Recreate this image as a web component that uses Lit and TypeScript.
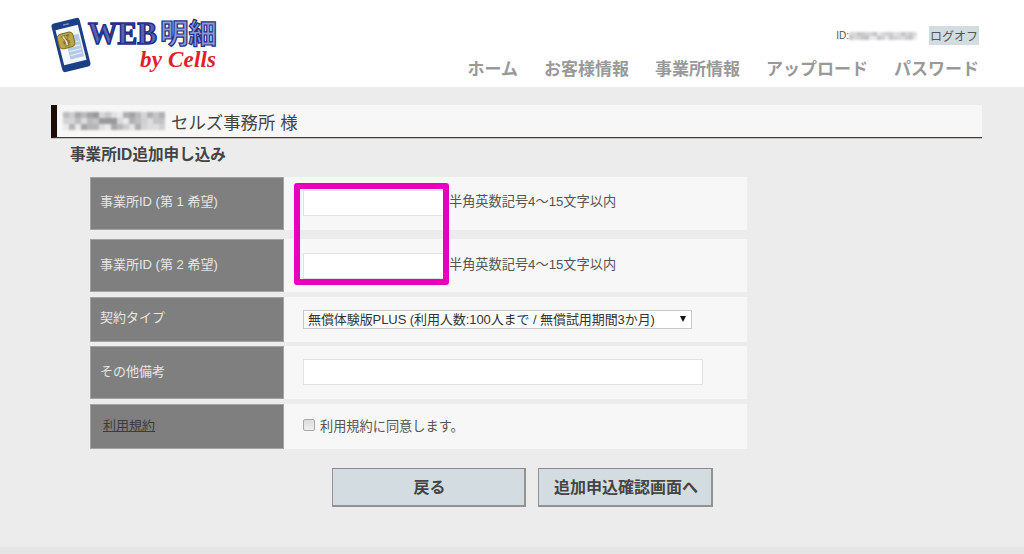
import { LitElement, html, css, svg, unsafeCSS } from "lit";
import { customElement } from "lit/decorators.js";

const SANS = unsafeCSS(`"Liberation Sans", "Noto Sans CJK JP", sans-serif`);

// Pseudo-random mosaic that stands in for the redacted text
function mosaic(cols: number, rows: number, size: number, seed: number, dark: number) {
  let s = seed;
  const out = [];
  for (let y = 0; y < rows; y++) {
    for (let x = 0; x < cols; x++) {
      s = (s * 9301 + 49297) % 233280;
      const t = s / 233280;
      const v = Math.round(dark + (236 - dark) * t);
      out.push(svg`<rect x=${x * size} y=${y * size} width=${size} height=${size} fill=${`rgb(${v},${v},${v + 2})`}></rect>`);
    }
  }
  return html`<svg class="mosaic" width=${cols * size} height=${rows * size}>${out}</svg>`;
}

@customElement("app-root")
export class AppRoot extends LitElement {
  static styles = css`
    :host {
      display: block;
      width: 1024px;
      height: 554px;
      overflow: hidden;
      position: relative;
      background: #ececec;
      font-family: ${SANS};
      color: #444;
    }
    .header {
      height: 87px;
      background: #fff;
      display: flex;
      justify-content: space-between;
      padding: 0 45px 0 51px;
      box-sizing: border-box;
    }
    .logo { display: block; margin-top: 16px; overflow: visible; }
    .head-right {
      display: flex;
      flex-direction: column;
      align-items: flex-end;
      padding-top: 26px;
    }
    .account { display: flex; align-items: center; height: 19px; font-size: 10px; color: #555; }
    .mosaic { display: block; }
    .id-mask { margin-right: 12px; filter: blur(0.8px); }
    .logoff {
      display: flex;
      align-items: center;
      justify-content: center;
      width: 50px;
      height: 19px;
      background: #d3dce1;
      font-size: 12px;
      color: #555;
    }
    .nav { display: flex; gap: 26px; margin-top: 15px; }
    .nav a { font-size: 17px; line-height: 20px; font-weight: 700; color: #999; text-decoration: none; }
    .title {
      margin: 18px 42px 0 51px;
      height: 33px;
      box-sizing: border-box;
      background: #f7f7f7;
      border-left: 6px solid #1c0b07;
      border-bottom: 1px solid #443a3a;
      box-shadow: 0 1px 0 #c4c0c0;
      display: flex;
      align-items: center;
      padding-left: 6px;
      font-size: 17.4px;
      color: #444;
    }
    .name-mask { margin-right: 6px; filter: blur(1px); }
    .heading {
      margin: 7px 0 0 70px;
      height: 32px;
      line-height: 19px;
      font-size: 15.6px;
      font-weight: 700;
      color: #444;
    }
    .table { margin-left: 90px; width: 657px; display: flex; flex-direction: column; gap: 5px; }
    .row { display: grid; grid-template-columns: 194px 1fr; background: #f7f7f7; }
    .tall { height: 53px; }
    .short { height: 45px; }
    .first { margin-bottom: 4px; }
    .tight { margin-bottom: -1px; }
    .label {
      background: #7f7f7f;
      border: 1px solid #a3a3a3;
      box-sizing: border-box;
      display: flex;
      align-items: center;
      padding: 0 0 6px 9px;
      font-size: 13px;
      color: #e6e6e6;
    }
    .low .label { padding-bottom: 4px; }
    .label a { color: #3c3c3c; text-decoration: underline; margin-left: 3px; }
    .cell { display: flex; align-items: center; padding-left: 19px; font-size: 13px; color: #555; }
    .cell-up { padding-bottom: 2px; }
    .cell-up-small { padding-bottom: 1px; }
    .text {
      box-sizing: border-box;
      height: 26px;
      border: 1px solid #e2e2e2;
      background: #fff;
      padding: 0;
      margin: 0;
    }
    .id-input { width: 141px; margin-right: 5px; }
    .wide { width: 400px; }
    .hint { margin-bottom: 4px; font-size: 13.2px; }
    .select-wrap { position: relative; width: 389px; height: 19px; }
    select {
      appearance: none;
      display: block;
      width: 100%;
      height: 100%;
      box-sizing: border-box;
      border: 1px solid #c8c8c8;
      background: #fff;
      padding: 0 0 0 4px;
      font: 13px ${SANS};
      letter-spacing: -0.08px;
      color: #333;
      border-radius: 0;
    }
    .select-wrap::after {
      content: "";
      position: absolute;
      right: 6px;
      top: 6px;
      border-left: 3.5px solid transparent;
      border-right: 3.5px solid transparent;
      border-top: 6px solid #111;
    }
    .check { display: flex; align-items: center; gap: 5px; margin-bottom: 2px; font-size: 13.2px; }
    input[type="checkbox"] {
      appearance: none;
      width: 12px;
      height: 12px;
      margin: 0 0 1px 0;
      box-sizing: border-box;
      border: 1px solid #a8a8a8;
      border-radius: 2px;
      background: linear-gradient(#dcdcdc, #efefef);
    }
    .buttons { display: flex; gap: 12px; margin: 19px 0 0 332px; }
    button {
      height: 39px;
      box-sizing: border-box;
      border: 2px solid #929292;
      border-top-color: #8a8a8a;
      border-left-width: 1px;
      border-top-width: 1px;
      background: #d3dce1;
      font: 700 16px ${SANS};
      color: #444;
      padding: 0 0 2px 2px;
    }
    .back { width: 194px; }
    .next { width: 175px; }
    .footer { position: absolute; left: 0; right: 0; bottom: 0; height: 7px; background: #e5e5e5; }
    .annotation {
      position: absolute;
      left: 294px;
      top: 183px;
      width: 155px;
      height: 102px;
      box-sizing: border-box;
      border: 6px solid #e600bd;
      border-radius: 3px;
      pointer-events: none;
    }
  `;

  private logo() {
    return html`<svg class="logo" width="170" height="60" viewBox="0 0 170 60" aria-label="WEB明細 by Cells">
      <g transform="translate(20 29) rotate(-14)">
        <rect x="-14.5" y="-25" width="29" height="50" rx="3" fill="#1b3f86"></rect>
        <rect x="-11.5" y="-18" width="23" height="36" fill="#f4f7fc"></rect>
        <rect x="-4" y="-9" width="14" height="23" fill="#b4c8e9"></rect>
        <g stroke="#eef3fb" stroke-width="1">
          <line x1="-3" y1="-2" x2="9" y2="-2"></line>
          <line x1="-3" y1="2" x2="9" y2="2"></line>
          <line x1="-3" y1="6" x2="9" y2="6"></line>
          <line x1="-3" y1="10" x2="9" y2="10"></line>
        </g>
        <rect x="-3" y="-22" width="6" height="1.5" fill="#7d93bf"></rect>
      </g>
      <g transform="translate(15 24) rotate(-14)">
        <rect x="-8" y="-7" width="16" height="15" rx="4" fill="#bda549" stroke="#7e6a22" stroke-width="1"></rect>
        <text x="0" y="6" text-anchor="middle" font-family="Liberation Serif" font-weight="700" font-size="16" fill="#f3e9b5" stroke="#5f4f18" stroke-width="0.5">¥</text>
      </g>
      <text x="37" y="28" font-family="Liberation Serif" font-weight="700" font-size="31" textLength="69" lengthAdjust="spacingAndGlyphs" fill="#5566b5" stroke="#1f2f86" stroke-width="1.6">WEB</text>
      <text x="109" y="28" font-family="Noto Sans CJK JP" font-weight="700" font-size="28" textLength="57" lengthAdjust="spacingAndGlyphs" fill="#8d99d4" stroke="#1f2f86" stroke-width="1.2">明細</text>
      <text x="89" y="51" font-family="Liberation Serif" font-weight="700" font-style="italic" font-size="23" textLength="76" lengthAdjust="spacing" fill="#e2202c">by Cells</text>
    </svg>`;
  }

  render() {
    return html`
      <div class="header">
        ${this.logo()}
        <div class="head-right">
          <div class="account">
            <span>ID:</span>
            <span class="id-mask">${mosaic(17, 2, 4, 7, 190)}</span>
            <span class="logoff">ログオフ</span>
          </div>
          <nav class="nav">
            <a href="#">ホーム</a>
            <a href="#">お客様情報</a>
            <a href="#">事業所情報</a>
            <a href="#">アップロード</a>
            <a href="#">パスワード</a>
          </nav>
        </div>
      </div>
      <div class="title">
        <span class="name-mask">${mosaic(17, 3, 6, 31, 150)}</span>
        <span>セルズ事務所 様</span>
      </div>
      <div class="heading">事業所ID追加申し込み</div>
      <div class="table">
        <div class="row tall first">
          <div class="label">事業所ID (第 1 希望)</div>
          <div class="cell cell-up"><input class="text id-input" type="text" /><span class="hint">半角英数記号4～15文字以内</span></div>
        </div>
        <div class="row tall low">
          <div class="label">事業所ID (第 2 希望)</div>
          <div class="cell"><input class="text id-input" type="text" /><span class="hint">半角英数記号4～15文字以内</span></div>
        </div>
        <div class="row short tight">
          <div class="label">契約タイプ</div>
          <div class="cell">
            <div class="select-wrap">
              <select><option>無償体験版PLUS (利用人数:100人まで / 無償試用期間3か月)</option></select>
            </div>
          </div>
        </div>
        <div class="row tall low">
          <div class="label">その他備考</div>
          <div class="cell cell-up-small"><input class="text wide" type="text" /></div>
        </div>
        <div class="row short low">
          <div class="label"><a href="#">利用規約</a></div>
          <div class="cell">
            <label class="check"><input type="checkbox" /><span>利用規約に同意します。</span></label>
          </div>
        </div>
      </div>
      <div class="buttons">
        <button class="back">戻る</button>
        <button class="next">追加申込確認画面へ</button>
      </div>
      <div class="footer"></div>
      <div class="annotation"></div>
    `;
  }
}
